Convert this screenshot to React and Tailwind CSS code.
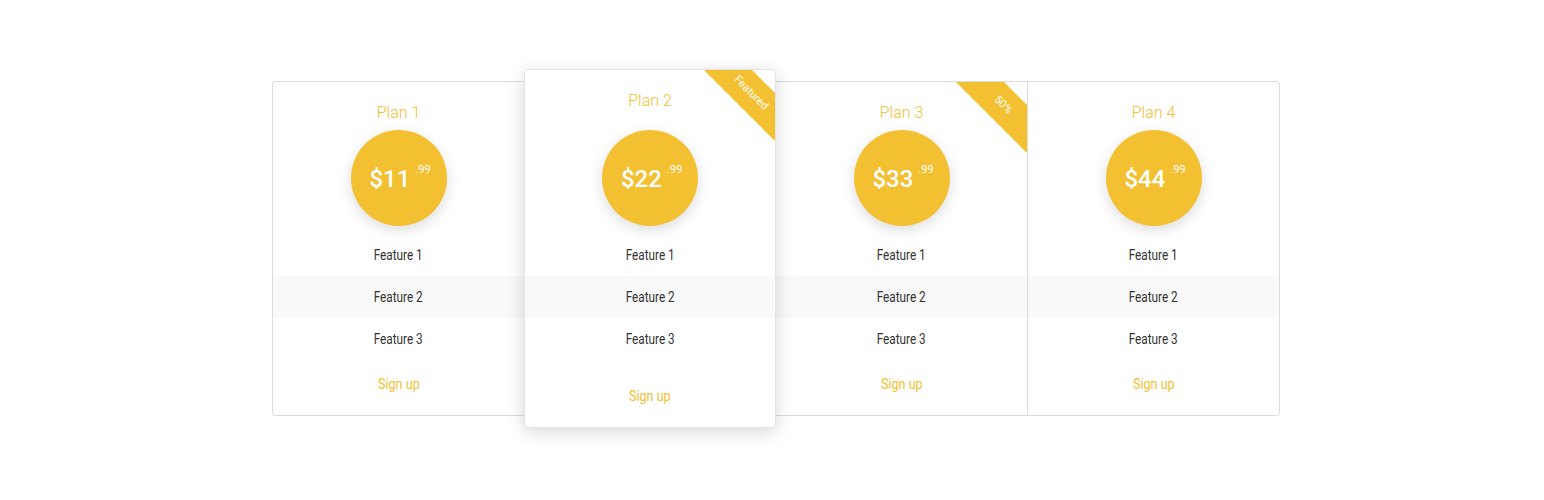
import React from 'react';

const roboto = { fontFamily: 'Roboto, "Liberation Sans", sans-serif' };

const PLANS = [
    { name: 'Plan 1', price: '$11', edge: 'border-l rounded-l-[4px]' },
    { name: 'Plan 2', price: '$22', featured: true, ribbon: 'Featured' },
    { name: 'Plan 3', price: '$33', edge: 'border-r', ribbon: '50%' },
    { name: 'Plan 4', price: '$44', edge: 'border-r rounded-r-[4px]' },
];

// no condensed face installed, so squeeze Roboto horizontally
const Narrow = ({ children, className = '' }) => (
    <span className={`inline-block scale-x-[0.84] ${className}`} style={roboto}>
        {children}
    </span>
);

const Ribbon = ({ label }) => (
    <div className="absolute top-0 right-0 w-[72px] h-[72px] overflow-hidden rounded-tr-[4px]">
        <div
            className="absolute left-[-2px] top-[6px] w-[100px] h-[34px] rotate-45 bg-[#f2c030] text-white text-[11px] flex items-center justify-center"
            style={roboto}
        >
            {label}
        </div>
    </div>
);

const PlanCard = ({ plan }) => {
    const { featured } = plan;

    return (
        <div
            className={
                featured
                    ? 'relative z-10 w-[252px] bg-white rounded-[4px] border border-[#e4e4e4] shadow-[0_4px_18px_rgba(0,0,0,0.16)] pt-[20px] pb-[22px]'
                    : `relative w-[252px] bg-white border-t border-b border-[#dcdcdc] pt-[20px] pb-[22px] ${plan.edge || ''}`
            }
        >
            {plan.ribbon && <Ribbon label={plan.ribbon} />}

            {/* Title + price */}
            <div className="flex flex-col items-center">
                <h3 className="h-[22px] leading-[22px] text-[16px] font-light text-[#f2c030]" style={roboto}>
                    {plan.name}
                </h3>
                <div
                    className={`${featured ? 'mt-[18px]' : 'mt-[6px]'} w-24 h-24 rounded-full bg-[#f2c030] shadow-[0_4px_14px_rgba(0,0,0,0.14)] flex items-center justify-center text-white`}
                    style={roboto}
                >
                    <div className="flex items-start pl-[3px] pt-[1px]">
                        <span className="text-[24px] leading-none font-medium">{plan.price}</span>
                        <span className="relative -top-[3px] ml-[5px] text-[11px] leading-none">.99</span>
                    </div>
                </div>
            </div>

            {/* Features */}
            <ul className="mt-[8px] text-[14px] text-[#333]">
                <li className="h-[42px] flex items-center justify-center"><Narrow>Feature 1</Narrow></li>
                <li className="h-[42px] flex items-center justify-center bg-[#f9f9f9]"><Narrow>Feature 2</Narrow></li>
                <li className="h-[42px] flex items-center justify-center"><Narrow>Feature 3</Narrow></li>
            </ul>

            {/* Footer */}
            <div className={`${featured ? 'pt-[25px]' : 'pt-[13px]'} flex justify-center`}>
                <a className="h-[20px] leading-[20px] text-[15px] text-[#f2c030]">
                    <Narrow className="scale-x-[0.82]">Sign up</Narrow>
                </a>
            </div>
        </div>
    );
};

export default function App() {
    return (
        <div className="w-full h-[500px] bg-white flex items-start justify-center pl-2 pt-[69px]">
            <div className="flex items-center">
                {PLANS.map((plan) => (
                    <PlanCard key={plan.name} plan={plan} />
                ))}
            </div>
        </div>
    );
}
